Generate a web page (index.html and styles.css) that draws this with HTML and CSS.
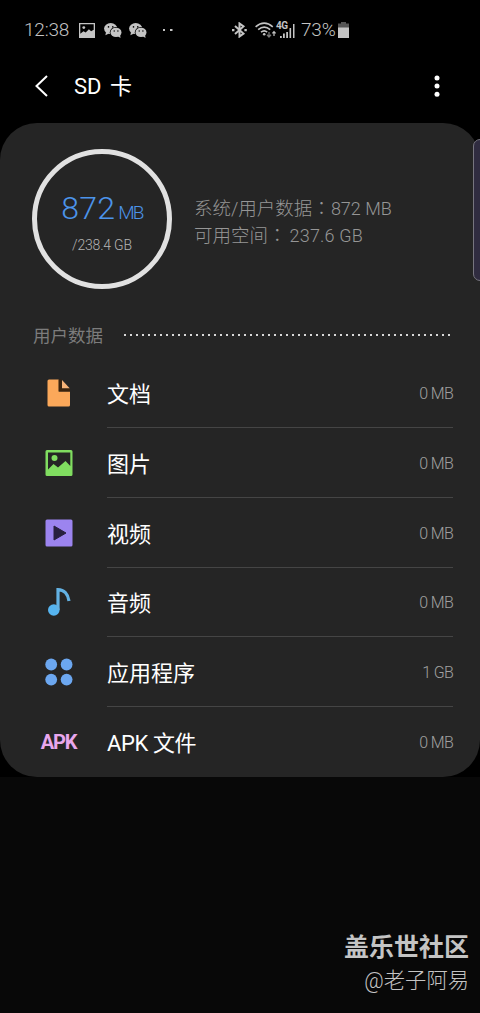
FILE: index.html
```html
<!DOCTYPE html>
<html lang="zh-CN">
<head>
<meta charset="utf-8">
<title>SD 卡</title>
<link rel="stylesheet" href="styles.css">
</head>
<body>
<div class="screen">
  <div class="status">
    <span class="clock">12:38</span>
    <svg class="s-pic" width="16" height="15" viewBox="0 0 16 15"><path fill="#c4c4c4" fill-rule="evenodd" d="M0 0h16v15H0zM1.3 1.3v9.5l3.2-2.6 2.2 1.4 3.2-3.4 2.2 2 2.6-1.4V1.3z"/><circle cx="4.8" cy="4.6" r="1.4" fill="#c4c4c4"/></svg>
    <svg class="s-chat" width="18" height="15" viewBox="0 0 18 15"><g fill="#c4c4c4"><ellipse cx="6.7" cy="5.6" rx="6.6" ry="5.5"/><path d="M2 9l-.6 3.2 3.6-1.8z"/></g><ellipse cx="11.8" cy="9.3" rx="6" ry="5.2" fill="#000"/><g fill="#c4c4c4"><ellipse cx="12" cy="9.4" rx="5.5" ry="4.7"/><path d="M13.5 13l3 1.9-.4-3.4z"/></g><g fill="#000"><circle cx="4.5" cy="3.9" r=".8"/><circle cx="8.8" cy="3.9" r=".8"/><circle cx="10.2" cy="8" r=".7"/><circle cx="13.9" cy="8" r=".7"/></g></svg>
    <svg class="s-chat2" width="18" height="15" viewBox="0 0 18 15"><g fill="#c4c4c4"><ellipse cx="6.7" cy="5.6" rx="6.6" ry="5.5"/><path d="M2 9l-.6 3.2 3.6-1.8z"/></g><ellipse cx="11.8" cy="9.3" rx="6" ry="5.2" fill="#000"/><g fill="#c4c4c4"><ellipse cx="12" cy="9.4" rx="5.5" ry="4.7"/><path d="M13.5 13l3 1.9-.4-3.4z"/></g><g fill="#000"><circle cx="4.5" cy="3.9" r=".8"/><circle cx="8.8" cy="3.9" r=".8"/><circle cx="10.2" cy="8" r=".7"/><circle cx="13.9" cy="8" r=".7"/></g></svg>
    <svg class="s-dots" width="10" height="2" viewBox="0 0 10 2"><path fill="#c4c4c4" d="M0 0h2v2H0zM7 0h2.5v2H7z"/></svg>
    <svg class="s-bt" width="15" height="16" viewBox="0 0 15 16"><path fill="none" stroke="#c4c4c4" stroke-width="2" d="M3 4l8.500 7.600L7.500 14.500V1.500l4 2.900L3 12"/><path fill="#c4c4c4" d="M0 7h2.400v2.200H0zM12.400 7h2.400v2.200h-2.400z"/></svg>
    <svg class="s-wifi" width="22" height="16" viewBox="0 0 22 16"><g fill="none" stroke="#c4c4c4" stroke-width="1.6"><path d="M.6 4.8Q9.2-2.6 17.8 4.8M3.2 7.6q6-5 12 0M6 10.2q3.2-2.6 6.2 0"/></g><circle cx="9.2" cy="12.200" r="1.3" fill="#c4c4c4"/><path stroke="#777" fill="none" stroke-width="1.3" d="M14 10v5M12 12.800l2 2.200 2-2.200"/><path stroke="#c4c4c4" fill="none" stroke-width="1.200" d="M19 14V9.500M17.400 11.300L19 9.600l1.600 1.700"/></svg>
    <span class="cell"><span class="net">4G</span><svg width="15" height="15" viewBox="0 0 15 15"><path fill="#c4c4c4" d="M0 13h1.800v2H0zM3 10.500h1.800V15H3zM6.200 9H8v6H6.200zM9.500 5h1.600v10H9.500zM13 1h1.500v14H13z"/></svg></span>
    <span class="percent">73%</span>
    <svg class="s-bat" width="11" height="16" viewBox="0 0 11 16"><path fill="#555" d="M3 0h5v1.500h3V6H0V1.500h3z"/><path fill="#c4c4c4" d="M0 5.500h11V16H0z"/></svg>
  </div>
  <div class="header">
    <svg class="back" width="13" height="22" viewBox="0 0 13 22"><path d="M12 1L1.500 11 12 21" fill="none" stroke="#fff" stroke-width="2"/></svg>
    <h1 class="title">SD 卡</h1>
    <svg class="more" width="6" height="22" viewBox="0 0 6 22"><g fill="#fff"><circle cx="3" cy="3" r="2.500"/><circle cx="3" cy="11" r="2.500"/><circle cx="3" cy="19.200" r="2.500"/></g></svg>
  </div>
  <main class="card">
    <section class="summary">
      <div class="ring">
        <div class="used"><span class="num">872</span><span class="unit">MB</span></div>
        <div class="total">/238.4 GB</div>
      </div>
      <div class="facts">
        <div class="fact">系统/用户数据<span class="colon" lang="zh-TW">：</span><span class="val">872 MB</span></div>
        <div class="fact">可用空间<span class="colon" lang="zh-TW">：</span><span class="val wide">237.6 GB</span></div>
      </div>
    </section>
    <div class="section-head">
      <span class="section-name">用户数据</span>
      <span class="dots"></span>
    </div>
    <div class="list">
      <div class="row">
        <div class="icon"><svg width="28" height="28" viewBox="0 0 28 28"><path fill="#fba85a" d="M4 .5h9.700v12h11.300V26a1.500 1.500 0 0 1-1.500 1.500H4A1.500 1.500 0 0 1 2.500 26V2A1.500 1.500 0 0 1 4 .5z"/><path fill="#3b230d" d="M13.700.5h3v8.800H25v3.200H13.700z"/><path fill="#f7b378" d="M17 1l7.700 8.200H17z"/></svg></div>
        <div class="entry"><span class="name">文档</span><span class="size">0 MB</span></div>
      </div>
      <div class="row">
        <div class="icon"><svg width="28" height="28" viewBox="0 0 28 28"><path fill="#80dd60" fill-rule="evenodd" d="M2 1h24a1.500 1.500 0 0 1 1.500 1.500v23A1.500 1.500 0 0 1 26 27H2a1.500 1.500 0 0 1-1.500-1.500v-23A1.500 1.500 0 0 1 2 1zM3 3.500V20.500l5.500-5.500 4.500 3.500 7.500-6.500 4.800 5V3.500z"/><circle cx="9.500" cy="9" r="3" fill="#80dd60"/></svg></div>
        <div class="entry"><span class="name">图片</span><span class="size">0 MB</span></div>
      </div>
      <div class="row">
        <div class="icon"><svg width="28" height="28" viewBox="0 0 28 28"><rect x=".5" y=".5" width="27" height="27" rx="1.500" fill="#9c84ef"/><path fill="#28203e" stroke="#28203e" stroke-linejoin="round" d="M9 7v14l12-7z"/></svg></div>
        <div class="entry"><span class="name">视频</span><span class="size">0 MB</span></div>
      </div>
      <div class="row">
        <div class="icon"><svg width="28" height="28" viewBox="0 0 28 28"><circle cx="8.800" cy="22" r="5.800" fill="#56b4ef"/><path fill="none" stroke="#63b2e3" stroke-width="3.200" d="M13 22V1.600C19 1.600 23 6 24 13"/></svg></div>
        <div class="entry"><span class="name">音频</span><span class="size">0 MB</span></div>
      </div>
      <div class="row">
        <div class="icon"><svg width="28" height="28" viewBox="0 0 28 28"><g fill="#6ca7f0"><circle cx="6.200" cy="6.500" r="5.900"/><circle cx="21.600" cy="6.500" r="5.900"/><circle cx="6.200" cy="21.600" r="5.900"/><circle cx="21.600" cy="21.600" r="5.900"/></g></svg></div>
        <div class="entry"><span class="name">应用程序</span><span class="size">1 GB</span></div>
      </div>
      <div class="row">
        <div class="icon apk">APK</div>
        <div class="entry"><span class="name latin">APK 文件</span><span class="size">0 MB</span></div>
      </div>
    </div>
  </main>
  <footer class="credit">
    <div class="community">盖乐世社区</div>
    <div class="author">@老子阿易</div>
  </footer>
  <div class="edge-handle"></div>
</div>
</body>
</html>
```
FILE: styles.css
```css
* { box-sizing: border-box; }
body { margin: 0; background: #000; }
.screen {
  position: relative;
  display: flex;
  flex-direction: column;
  width: 480px;
  height: 1013px;
  overflow: hidden;
  background: #000;
  color: #fff;
  font-family: Roboto, "Noto Sans CJK SC", sans-serif;
  font-weight: 300;
  white-space: nowrap;
}
svg { display: block; flex: none; }

/* Status bar */
.status { display: flex; align-items: center; height: 60px; padding-left: 24px; color: #c4c4c4; }
.clock { width: 55px; font-size: 19px; line-height: 20px; letter-spacing: -0.2px; }
.s-chat { margin-left: 9px; }
.s-chat2 { margin-left: 7px; }
.s-dots { margin-left: 16px; }
.s-bt { margin-left: 59px; }
.s-wifi { margin-left: 8px; }
.cell { display: flex; align-items: center; width: 20px; height: 16px; }
.net { width: 4px; align-self: flex-start; font-size: 10px; line-height: 8px; font-weight: 700; letter-spacing: -0.5px; }
.cell { margin-left: -1px; }
.percent { width: 35px; margin-left: 5px; font-size: 19px; line-height: 20px; letter-spacing: -0.2px; }
.s-bat { margin-left: 2px; }

/* Title bar */
.header { display: flex; align-items: center; height: 63px; padding: 0 40px 11px 35px; }
.title { flex: 1; margin: 1px 0 0 26px; font-size: 22px; line-height: 26px; font-weight: 400; letter-spacing: 0; word-spacing: 3px; }

/* Storage card */
.card { height: 654px; flex: none; border-radius: 37px; background: #252525; }
.summary { display: flex; height: 193px; padding: 26px 0 0 32px; }
.ring {
  display: flex;
  flex-direction: column;
  align-items: center;
  width: 140px;
  height: 140px;
  padding-top: 36px;
  border: 5px solid #e1e1e1;
  border-radius: 50%;
}
.used { display: flex; align-items: baseline; height: 43px; line-height: 36px; color: #4c94ea; }
.num { font-size: 32px; letter-spacing: 0.2px; }
.unit { margin-left: 3px; font-size: 19px; letter-spacing: -1.8px; }
.total { font-size: 14px; line-height: 24px; color: #b4b4b4; letter-spacing: -0.2px; }
.facts { padding: 45px 0 0 22px; color: #969696; }
.fact { height: 27px; font-size: 18.5px; line-height: 26px; }
.colon { font-family: "Noto Sans CJK TC", sans-serif; }
.val { font-size: 18px; }
.wide { margin-left: 3px; letter-spacing: 0.2px; }
.section-head { display: flex; align-items: center; height: 43px; padding: 0 27px 4px 33px; }
.section-name { width: 91px; font-size: 17.5px; line-height: 24px; font-weight: 400; color: #7c7c7c; }
.dots { flex: 1; height: 2px; margin-top: -2px; background: repeating-linear-gradient(90deg, #d8d8d8 0 2px, transparent 2px 6px); }

/* Category list */
.list { display: grid; grid-template-rows: repeat(6, 69.67px); margin-top: -0.4px; }
.row { display: flex; }
.icon { display: flex; align-items: center; justify-content: center; width: 107px; padding: 0 0 0 10px; }
.apk { font-size: 20px; font-weight: 700; color: #e9a7ed; letter-spacing: -1.2px; }
.entry { display: flex; align-items: center; justify-content: space-between; width: 346px; padding-top: 2px; border-bottom: 1px solid #454545; }
.row:last-child .entry { border-bottom-color: transparent; }
.name { padding-bottom: 3px; font-size: 22px; font-weight: 400; }
.latin { letter-spacing: -0.4px; }
.size { font-size: 16px; color: #a0a0a0; letter-spacing: -0.7px; }

/* Credit */
.credit { flex: 1; padding: 154px 11px 0 0; background: #080808; text-align: right; color: #c4c4c4; }
.community { font-size: 25px; line-height: 34px; font-weight: 700; }
.author { font-size: 21.3px; line-height: 32px; }

/* Edge panel handle, over the card */
.edge-handle { position: absolute; left: 473px; top: 139px; width: 16px; height: 142px; border: 1px solid #77757f; border-radius: 7px; background: #302c40; }
```
